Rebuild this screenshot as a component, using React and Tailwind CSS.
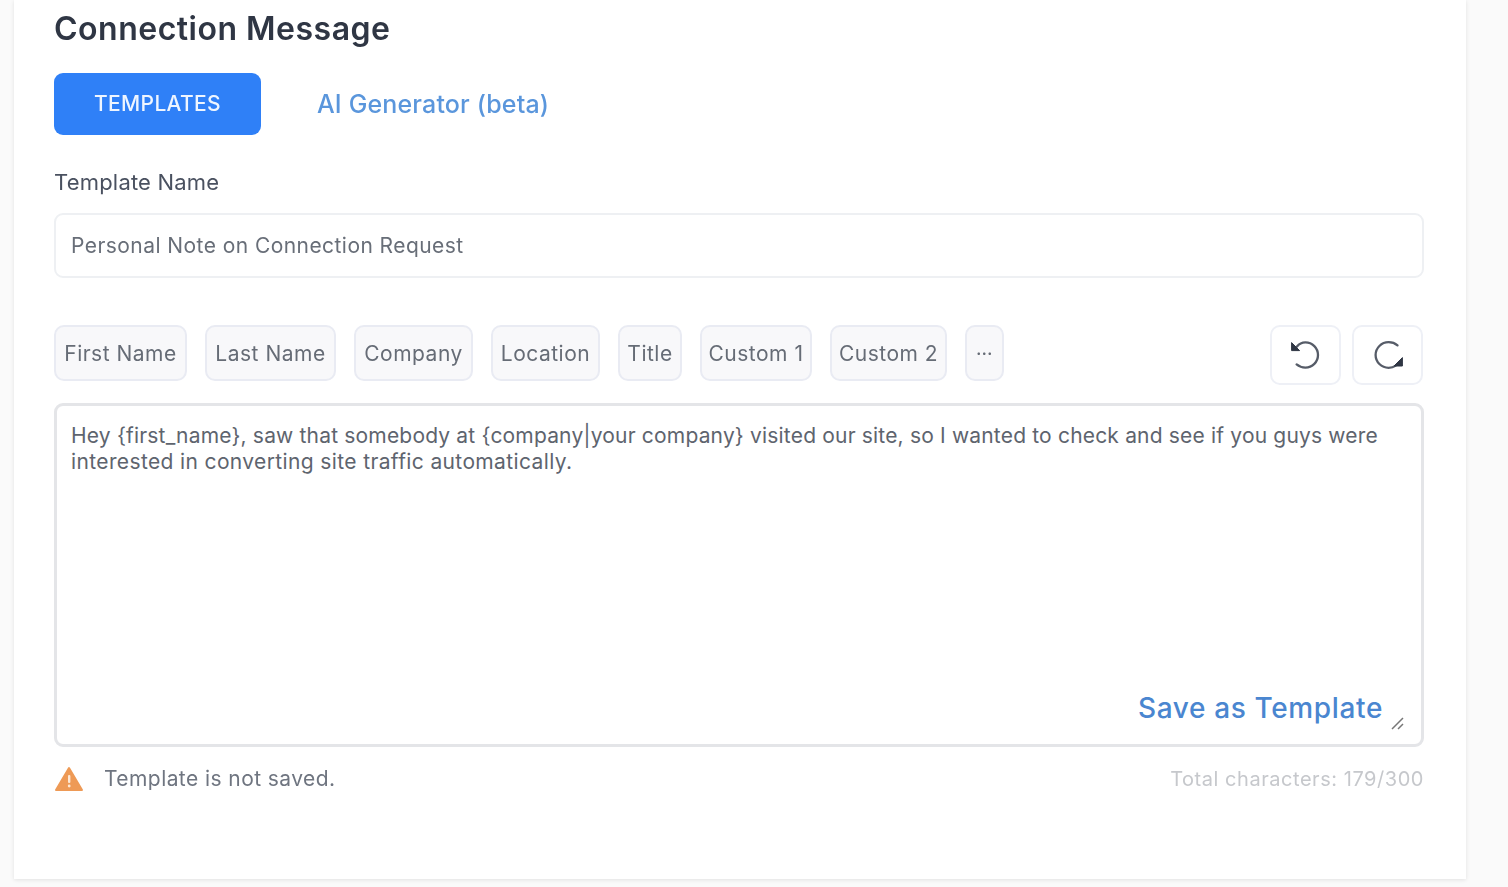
import React from "react";

const chips = [
  ["First Name", "w-[133px]"],
  ["Last Name", "w-[131px]"],
  ["Company", "w-[119px]"],
  ["Location", "w-[109px]"],
  ["Title", "w-[64px]"],
  ["Custom 1", "w-[112px]"],
  ["Custom 2", "w-[117px]"],
];

function UndoIcon() {
  return (
    <svg width="32" height="32" viewBox="0 0 32 32" fill="none">
      <path d="M8 7.5 C10 5 13 3.4 16.4 3.4 C23.4 3.4 29 9 29 16 C29 23 23.4 28.6 16.4 28.6 C13 28.6 10 27.4 7.6 25.4" stroke="#565c68" strokeWidth="2.3" strokeLinecap="round" />
      <path d="M2.6 3.6 L2.6 11.6 L10.6 11.6 Z" fill="#2f3644" stroke="#2f3644" strokeWidth="1" strokeLinejoin="round" />
    </svg>
  );
}

function RedoIcon() {
  return (
    <svg width="32" height="32" viewBox="0 0 32 32" fill="none">
      <path d="M25.5 6.4 C23 4.2 20 3.2 16.6 3.2 C9.4 3.2 3.6 9 3.6 16 C3.6 23 9.4 28.8 16.6 28.8 C19.4 28.8 21.8 28 23.8 26.6" stroke="#565c68" strokeWidth="2.3" strokeLinecap="round" />
      <path d="M30.4 18.6 L30.4 27 L22 27 Z" fill="#2f3644" stroke="#2f3644" strokeWidth="1" strokeLinejoin="round" />
    </svg>
  );
}

export default function App() {
  return (
    <div className="h-[887px] w-[1508px] overflow-hidden bg-[#fafafa] font-['Inter',_'Liberation_Sans',_sans-serif]">
      <div className="ml-[14px] flex h-[879px] w-[1452px] flex-col bg-white pl-[40px] pr-[42px] pt-[9px] shadow-[0_1px_4px_rgba(0,0,0,0.10)] blur-[0.6px]">
        <h1 className="h-[38px] pt-[1px] text-[32px] font-semibold leading-[38px] tracking-[0.5px] text-[#2f3644]">Connection Message</h1>

        <div className="mt-[26px] flex items-center">
          <button className="h-[62px] w-[207px] rounded-[9px] bg-[#2f80f7] text-[21px] font-medium tracking-[0.35px] text-[#eef5ff]">TEMPLATES</button>
          <span className="ml-[56px] pt-[2px] text-[25px] font-medium tracking-[0.15px] text-[#5a96dc]">AI Generator (beta)</span>
        </div>

        <label className="mt-[33px] h-[28px] text-[22px] leading-[28px] tracking-[0.2px] text-[#4a5160]">Template Name</label>

        <div className="mt-[17px] flex h-[65px] items-center rounded-[9px] border-2 border-[#eef0f3] px-[15px] text-[21px] tracking-[0.44px] text-[#686e78]">
          Personal Note on Connection Request
        </div>

        <div className="mt-[47px] flex h-[60px] items-start justify-between">
          <div className="flex gap-[18px]">
            {chips.map(([t, w]) => (
              <div key={t} className={`${w} flex h-[56px] items-center justify-center rounded-[10px] border-2 border-[#e9ebf3] bg-[#f8f8fa] pt-[2px] text-[21px] tracking-[0.5px] text-[#666c76]`}>
                {t}
              </div>
            ))}
            <div className="flex h-[56px] w-[39px] items-center justify-center rounded-[10px] border-2 border-[#e9ebf3] bg-[#f8f8fa] pb-[5px] text-[15px] font-bold tracking-[0.5px] text-[#666c76]">
              ...
            </div>
          </div>
          <div className="mr-[1px] flex gap-[11px]">
            <button className="flex h-[60px] w-[71px] items-center justify-center rounded-[10px] border-2 border-[#eef0f6] bg-white pr-[1px]"><UndoIcon /></button>
            <button className="flex h-[60px] w-[71px] items-center justify-center rounded-[10px] border-2 border-[#eef0f6] bg-white"><RedoIcon /></button>
          </div>
        </div>

        <div className="relative mt-[18px] h-[344px] rounded-[9px] border-[3px] border-[#e4e5e8] bg-white pl-[14px] pt-[17px] text-[21px] leading-[26px] tracking-[0.18px] text-[#5e646e]">
          <div className="whitespace-nowrap">Hey {"{first_name}"}, saw that somebody at {"{company|your company}"} visited our site, so I wanted to check and see if you guys were</div>
          <div className="whitespace-nowrap tracking-[0.37px]">interested in converting site traffic automatically.</div>
          <span className="absolute bottom-[19px] right-[38px] text-[28px] font-medium leading-[34px] tracking-[0.64px] text-[#4a86d0]">Save as Template</span>
          <svg width="16" height="16" viewBox="0 0 16 16" className="absolute bottom-[13px] right-[15px]" fill="none">
            <path d="M2 14 L13 3 M8 14 L13 9" stroke="#777" strokeWidth="1.5" />
          </svg>
        </div>

        <div className="mt-[16px] flex items-center justify-between">
          <div className="flex items-center">
            <svg width="30" height="28" viewBox="0 0 30 28">
              <path d="M15 3 L28 25 L2 25 Z" fill="#ee9a56" stroke="#ee9a56" strokeWidth="2" strokeLinejoin="round" />
              <rect x="14" y="10" width="2.4" height="8" rx="1" fill="#fde9d6" />
              <circle cx="15.2" cy="21" r="1.4" fill="#fde9d6" />
            </svg>
            <span className="ml-[20px] text-[21px] tracking-[0.43px] text-[#6f7580]">Template is not saved.</span>
          </div>
          <span className="text-[20px] tracking-[0.54px] text-[#c6c8cc]">Total characters: 179/300</span>
        </div>
      </div>
    </div>
  );
}
